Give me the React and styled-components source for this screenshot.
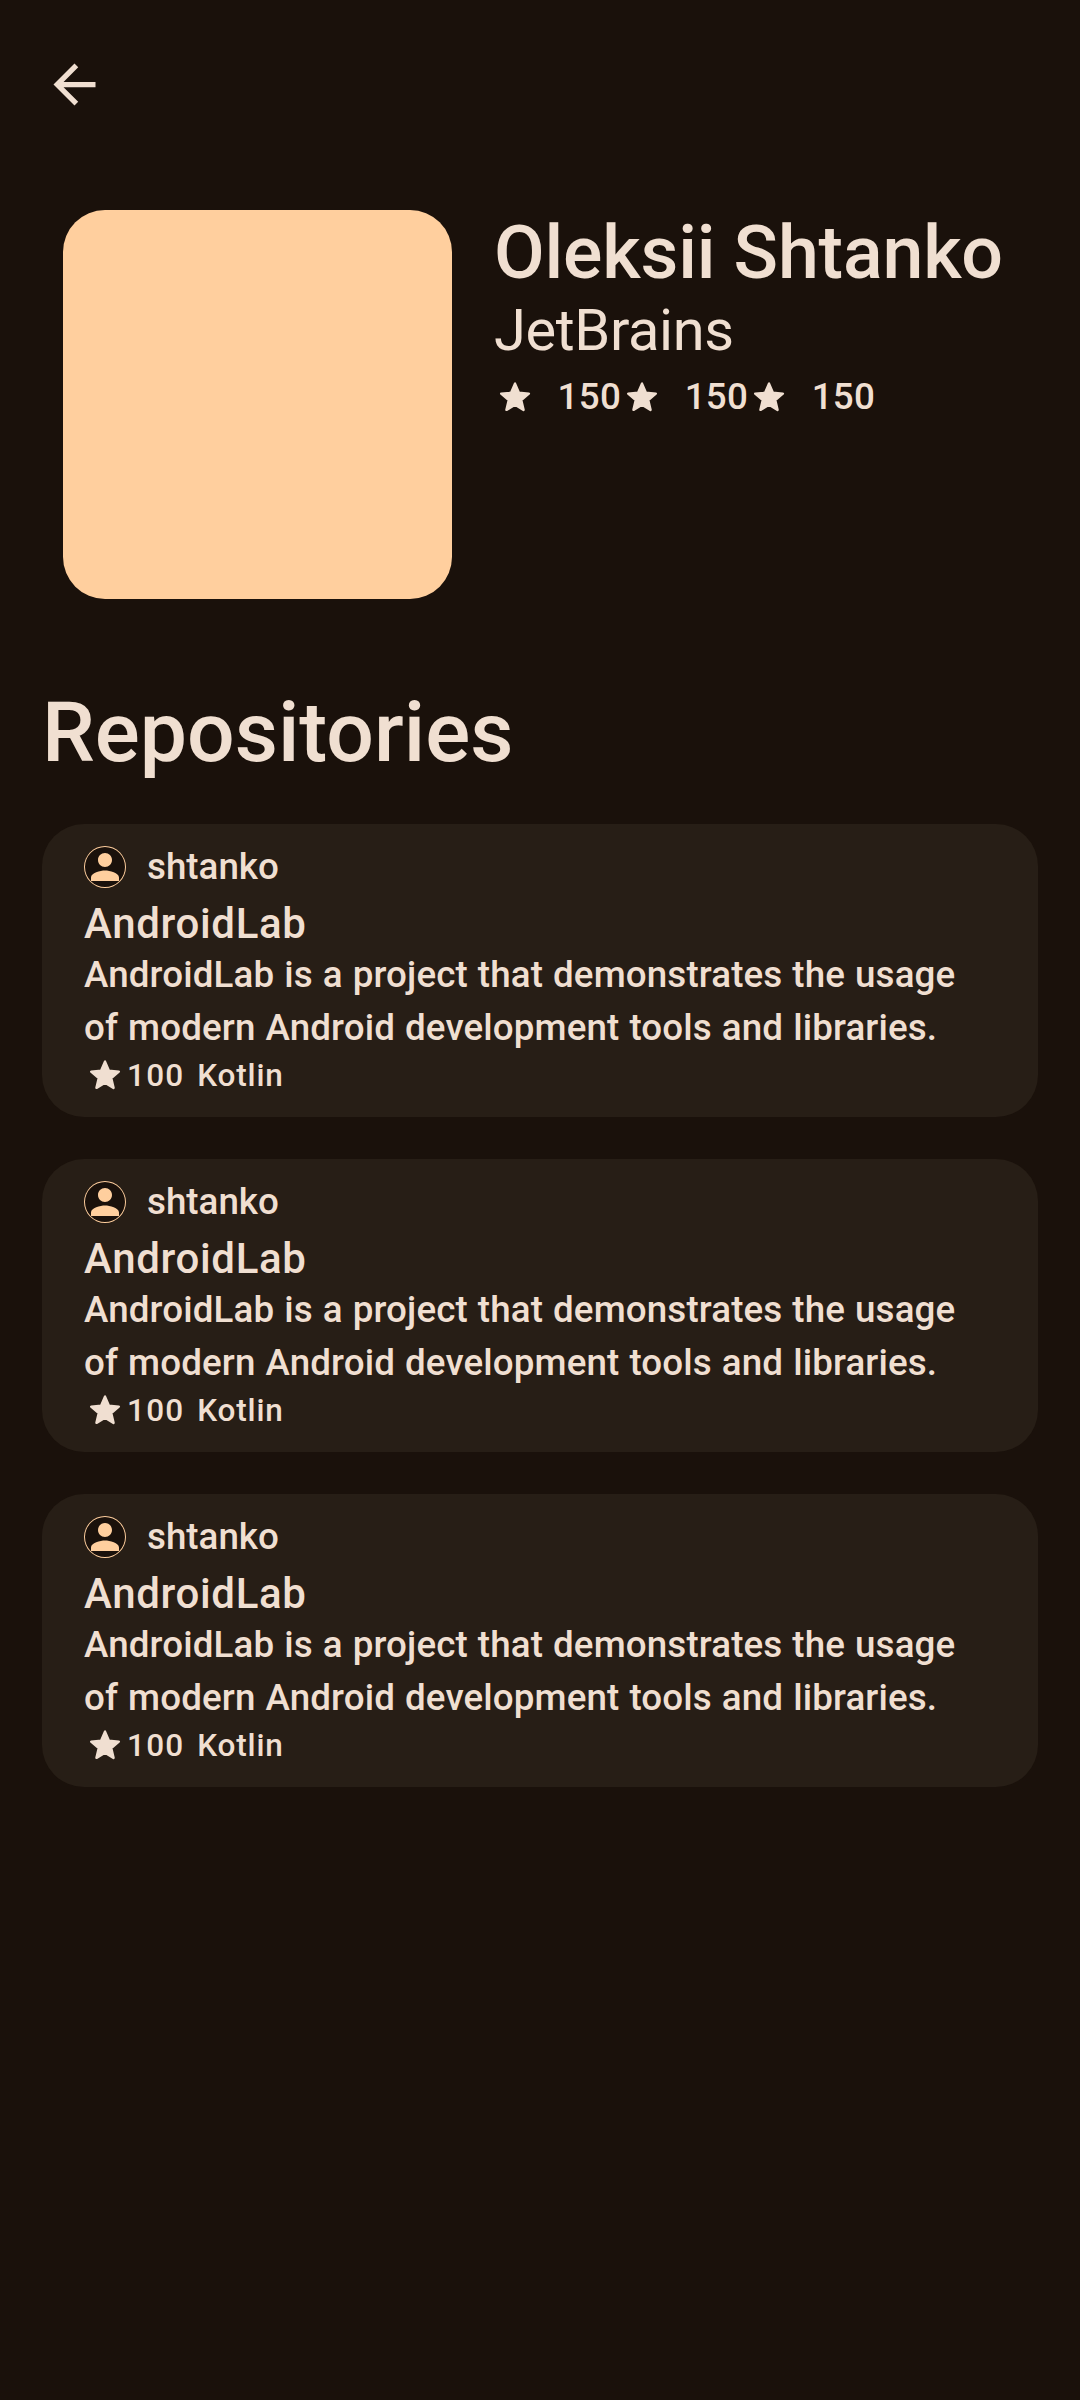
import React from "react";
import styled, { createGlobalStyle } from "styled-components";

const GlobalStyle = createGlobalStyle`
  * { box-sizing: border-box; }
  html, body { margin: 0; padding: 0; background: #1a110b; }
  body { font-family: Roboto, "Noto Sans", sans-serif; color: #f0dfd1; }
  h1, h2, h3, p { margin: 0; }
`;

const Screen = styled.main`
  width: 1080px;
  min-height: 2400px;
  background: #1a110b;
`;

const TopBar = styled.header`
  height: 169px;
  padding-left: 43px;
  display: flex;
  align-items: center;
`;

const BackButton = styled.button`
  width: 63px;
  height: 63px;
  padding: 0;
  border: 0;
  background: none;
  color: #f0dfd1;
`;

const Icon = styled.svg`
  display: block;
  flex: none;
  width: ${(p) => p.$size}px;
  height: ${(p) => p.$size}px;
  fill: currentColor;
`;

const Profile = styled.section`
  display: flex;
  gap: 42px;
  padding: 41px 63px 0;
`;

const Picture = styled.div`
  flex: none;
  width: 389px;
  height: 389px;
  border-radius: 42px;
  background: #ffcf9e;
`;

const Details = styled.div`
  display: flex;
  flex-direction: column;
  white-space: nowrap;
`;

const Name = styled.h1`
  font-size: 73.5px;
  line-height: 86px;
  letter-spacing: -0.14px;
  font-weight: 500;
`;

const Company = styled.p`
  font-size: 57.75px;
  line-height: 68px;
  letter-spacing: -0.37px;
`;

const Stats = styled.div`
  display: flex;
  align-items: center;
  height: 66px;
`;

const Stat = styled.div`
  display: flex;
  align-items: center;
  gap: 21.6px;
  font-size: 36.75px;
  line-height: 52px;
  letter-spacing: 0.2625px;
  font-weight: 500;
`;

const SectionTitle = styled.h2`
  padding: 81px 42px 0;
  font-size: 84px;
  line-height: 105px;
  font-weight: 500;
`;

const RepoList = styled.div`
  display: flex;
  flex-direction: column;
  gap: 42px;
  padding: 39px 42px 42px;
`;

const Card = styled.article`
  height: 293px;
  padding: 22px 42px 21px;
  border-radius: 42px;
  background: #271e16;
`;

const Owner = styled.div`
  display: flex;
  align-items: center;
  gap: 21px;
  height: 42px;
  font-size: 36.75px;
  line-height: 42px;
  font-weight: 500;
`;

const OwnerAvatar = styled.span`
  display: grid;
  place-items: center;
  width: 42px;
  height: 42px;
  border-radius: 50%;
  background: #1a110b;
  box-shadow: inset 0 0 0 1px #ffcf9e;
  color: #ffcf9e;
`;

const RepoName = styled.h3`
  padding-top: 4px;
  font-size: 42px;
  line-height: 63px;
  letter-spacing: 0.66px;
  font-weight: 500;
`;

const Description = styled.p`
  width: 912px;
  margin-top: -7px;
  font-size: 36.75px;
  line-height: 53px;
  letter-spacing: 0.12px;
  word-spacing: 0.75px;
  font-weight: 500;
`;

const Meta = styled.div`
  display: flex;
  align-items: center;
  height: 42px;
  font-size: 31.5px;
  line-height: 37px;
  font-weight: 500;
`;

const StarCount = styled.span`
  padding: 1px 0 0 1px;
  letter-spacing: 1.25px;
`;

const Language = styled.span`
  padding-top: 1px;
  margin-left: 12.8px;
  letter-spacing: 0.82px;
`;

const Star = () => (
  <Icon $size={42} viewBox="0 0 42 42" aria-hidden="true">
    <path
      transform="translate(4.44 4.9) scale(1.38)"
      d="M12 17.27L18.18 21l-1.64-7.03L22 9.24l-7.19-.61L12 2 9.19 8.63 2 9.24l5.46 4.73L5.82 21z"
      stroke="currentColor"
      strokeWidth="1.8"
      strokeLinejoin="round"
    />
  </Icon>
);

const repositories = [1, 2, 3].map((id) => ({
  id,
  owner: "shtanko",
  name: "AndroidLab",
  description:
    "AndroidLab is a project that demonstrates the usage of modern Android development tools and libraries.",
  stars: 100,
  language: "Kotlin",
}));

function RepoCard({ repo }) {
  return (
    <Card>
      <Owner>
        <OwnerAvatar>
          <Icon $size={42} viewBox="0 0 24 24" aria-hidden="true">
            <path d="M12 12c2.21 0 4-1.79 4-4s-1.79-4-4-4-4 1.79-4 4 1.79 4 4 4zm0 2c-2.67 0-8 1.34-8 4v2h16v-2c0-2.66-5.33-4-8-4z" />
          </Icon>
        </OwnerAvatar>
        <span>{repo.owner}</span>
      </Owner>
      <RepoName>{repo.name}</RepoName>
      <Description>{repo.description}</Description>
      <Meta>
        <Star />
        <StarCount>{repo.stars}</StarCount>
        <Language>{repo.language}</Language>
      </Meta>
    </Card>
  );
}

export default function App() {
  return (
    <>
      <GlobalStyle />
      <Screen>
        <TopBar>
          <BackButton aria-label="Back">
            <Icon $size={63} viewBox="0 0 24 24">
              <path d="M20 11H7.83l5.59-5.59L12 4l-8 8 8 8 1.41-1.41L7.83 13H20v-2z" />
            </Icon>
          </BackButton>
        </TopBar>
        <Profile>
          <Picture />
          <Details>
            <Name>Oleksii Shtanko</Name>
            <Company>JetBrains</Company>
            <Stats>
              {[150, 150, 150].map((count, index) => (
                <Stat key={index}>
                  <Star />
                  <span>{count}</span>
                </Stat>
              ))}
            </Stats>
          </Details>
        </Profile>
        <SectionTitle>Repositories</SectionTitle>
        <RepoList>
          {repositories.map((repo) => (
            <RepoCard key={repo.id} repo={repo} />
          ))}
        </RepoList>
      </Screen>
    </>
  );
}
